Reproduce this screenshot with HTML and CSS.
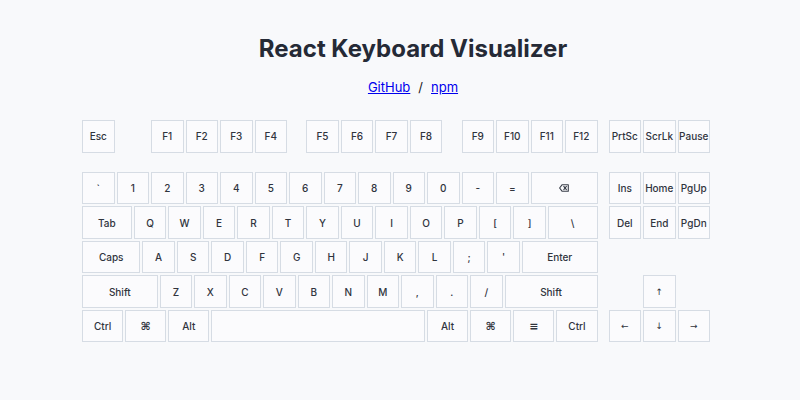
FILE: index.html
```html
<!DOCTYPE html>
<html lang="en">
<head>
<meta charset="utf-8">
<title>React Keyboard Visualizer</title>
<link rel="stylesheet" href="styles.css">
</head>
<body>
<div class="page">
  <header class="header">
    <h1 class="title">React Keyboard Visualizer</h1>
    <p class="links"><a href="#">GitHub</a><span class="sep">/</span><a href="#">npm</a></p>
  </header>
  <div class="keyboard">
    <div class="main">
      <div class="row frow">
        <div class="key">Esc</div>
        <div class="spacer s1"></div>
        <div class="key">F1</div><div class="key">F2</div><div class="key">F3</div><div class="key">F4</div>
        <div class="spacer s05"></div>
        <div class="key">F5</div><div class="key">F6</div><div class="key">F7</div><div class="key">F8</div>
        <div class="spacer s05"></div>
        <div class="key">F9</div><div class="key">F10</div><div class="key">F11</div><div class="key">F12</div>
      </div>
      <div class="row">
        <div class="key">`</div><div class="key">1</div><div class="key">2</div><div class="key">3</div><div class="key">4</div><div class="key">5</div><div class="key">6</div><div class="key">7</div><div class="key">8</div><div class="key">9</div><div class="key">0</div><div class="key">-</div><div class="key">=</div>
        <div class="key w2"><svg class="bksp" width="10" height="8" viewBox="0 0 10 8"><path d="M3.2 0.7 H9.3 V7.3 H3.2 L0.6 4 Z" fill="none" stroke="#3a3f4a" stroke-width="1.1" stroke-linejoin="round"/><path d="M4.8 2.4 L7.4 5.6 M7.4 2.4 L4.8 5.6" stroke="#3a3f4a" stroke-width="1.1" stroke-linecap="round"/></svg></div>
      </div>
      <div class="row">
        <div class="key w15">Tab</div>
        <div class="key">Q</div><div class="key">W</div><div class="key">E</div><div class="key">R</div><div class="key">T</div><div class="key">Y</div><div class="key">U</div><div class="key">I</div><div class="key">O</div><div class="key">P</div><div class="key">[</div><div class="key">]</div>
        <div class="key w15">\</div>
      </div>
      <div class="row">
        <div class="key w175">Caps</div>
        <div class="key">A</div><div class="key">S</div><div class="key">D</div><div class="key">F</div><div class="key">G</div><div class="key">H</div><div class="key">J</div><div class="key">K</div><div class="key">L</div><div class="key">;</div><div class="key">'</div>
        <div class="key w225">Enter</div>
      </div>
      <div class="row">
        <div class="key w225">Shift</div>
        <div class="key">Z</div><div class="key">X</div><div class="key">C</div><div class="key">V</div><div class="key">B</div><div class="key">N</div><div class="key">M</div><div class="key">,</div><div class="key">.</div><div class="key">/</div>
        <div class="key w275">Shift</div>
      </div>
      <div class="row">
        <div class="key w125">Ctrl</div>
        <div class="key w125 sym">⌘</div>
        <div class="key w125">Alt</div>
        <div class="key w625"></div>
        <div class="key w125">Alt</div>
        <div class="key w125 sym">⌘</div>
        <div class="key w125 sym">≡</div>
        <div class="key w125">Ctrl</div>
      </div>
    </div>
    <div class="nav">
      <div class="row frow">
        <div class="key">PrtSc</div><div class="key">ScrLk</div><div class="key">Pause</div>
      </div>
      <div class="row">
        <div class="key">Ins</div><div class="key">Home</div><div class="key">PgUp</div>
      </div>
      <div class="row">
        <div class="key">Del</div><div class="key">End</div><div class="key">PgDn</div>
      </div>
      <div class="row"></div>
      <div class="row">
        <div class="spacer s1"></div><div class="key arrow">↑</div>
      </div>
      <div class="row">
        <div class="key arrow">←</div><div class="key arrow">↓</div><div class="key arrow">→</div>
      </div>
    </div>
  </div>
</div>
</body>
</html>
```

FILE: styles.css
```css
:root {
  --u: 34.5px;
}
* { box-sizing: border-box; }
html, body {
  margin: 0;
  padding: 0;
  background: #f8f9fb;
}
body {
  font-family: Inter, "Liberation Sans", sans-serif;
  color: #2a2f3a;
}
.page {
  width: 800px;
  height: 400px;
}
.header {
  padding-left: 26px;
  text-align: center;
}
.title {
  margin: 0;
  padding-top: 34px;
  font-size: 24px;
  line-height: 29px;
  font-weight: 700;
  color: #252a36;
}
.links {
  margin: 14px 0 0;
  font-size: 13px;
  line-height: 20px;
  color: #222;
}
.links a {
  color: #0000ee;
  text-decoration: underline;
}
.sep {
  margin: 0 8px;
}
.keyboard {
  display: flex;
  margin-top: 22px;
  margin-left: 81px;
  gap: 9px;
}
.main, .nav {
  display: flex;
  flex-direction: column;
}
.row {
  display: flex;
  height: var(--u);
}
.frow {
  margin-bottom: calc(var(--u) * 0.5);
}
.key {
  width: calc(var(--u) - 2px);
  height: calc(var(--u) - 2px);
  margin: 1px;
  flex: none;
  border: 1px solid #d6dce4;
  background: #fbfbfd;
  display: flex;
  align-items: center;
  justify-content: center;
  font-size: 10px;
  font-weight: 500;
  color: #30343d;
  white-space: nowrap;
}
.sym {
  font-family: "DejaVu Sans", sans-serif;
  font-size: 11px;
  font-weight: 700;
}
.arrow {
  font-family: "DejaVu Sans", sans-serif;
  font-size: 9px;
}
.w125 { width: calc(var(--u) * 1.25 - 2px); }
.w15 { width: calc(var(--u) * 1.5 - 2px); }
.w175 { width: calc(var(--u) * 1.75 - 2px); }
.w2 { width: calc(var(--u) * 2 - 2px); }
.w225 { width: calc(var(--u) * 2.25 - 2px); }
.w275 { width: calc(var(--u) * 2.75 - 2px); }
.w625 { width: calc(var(--u) * 6.25 - 2px); }
.spacer { flex: none; }
.s1 { width: var(--u); }
.s05 { width: calc(var(--u) * 0.5); }
```
